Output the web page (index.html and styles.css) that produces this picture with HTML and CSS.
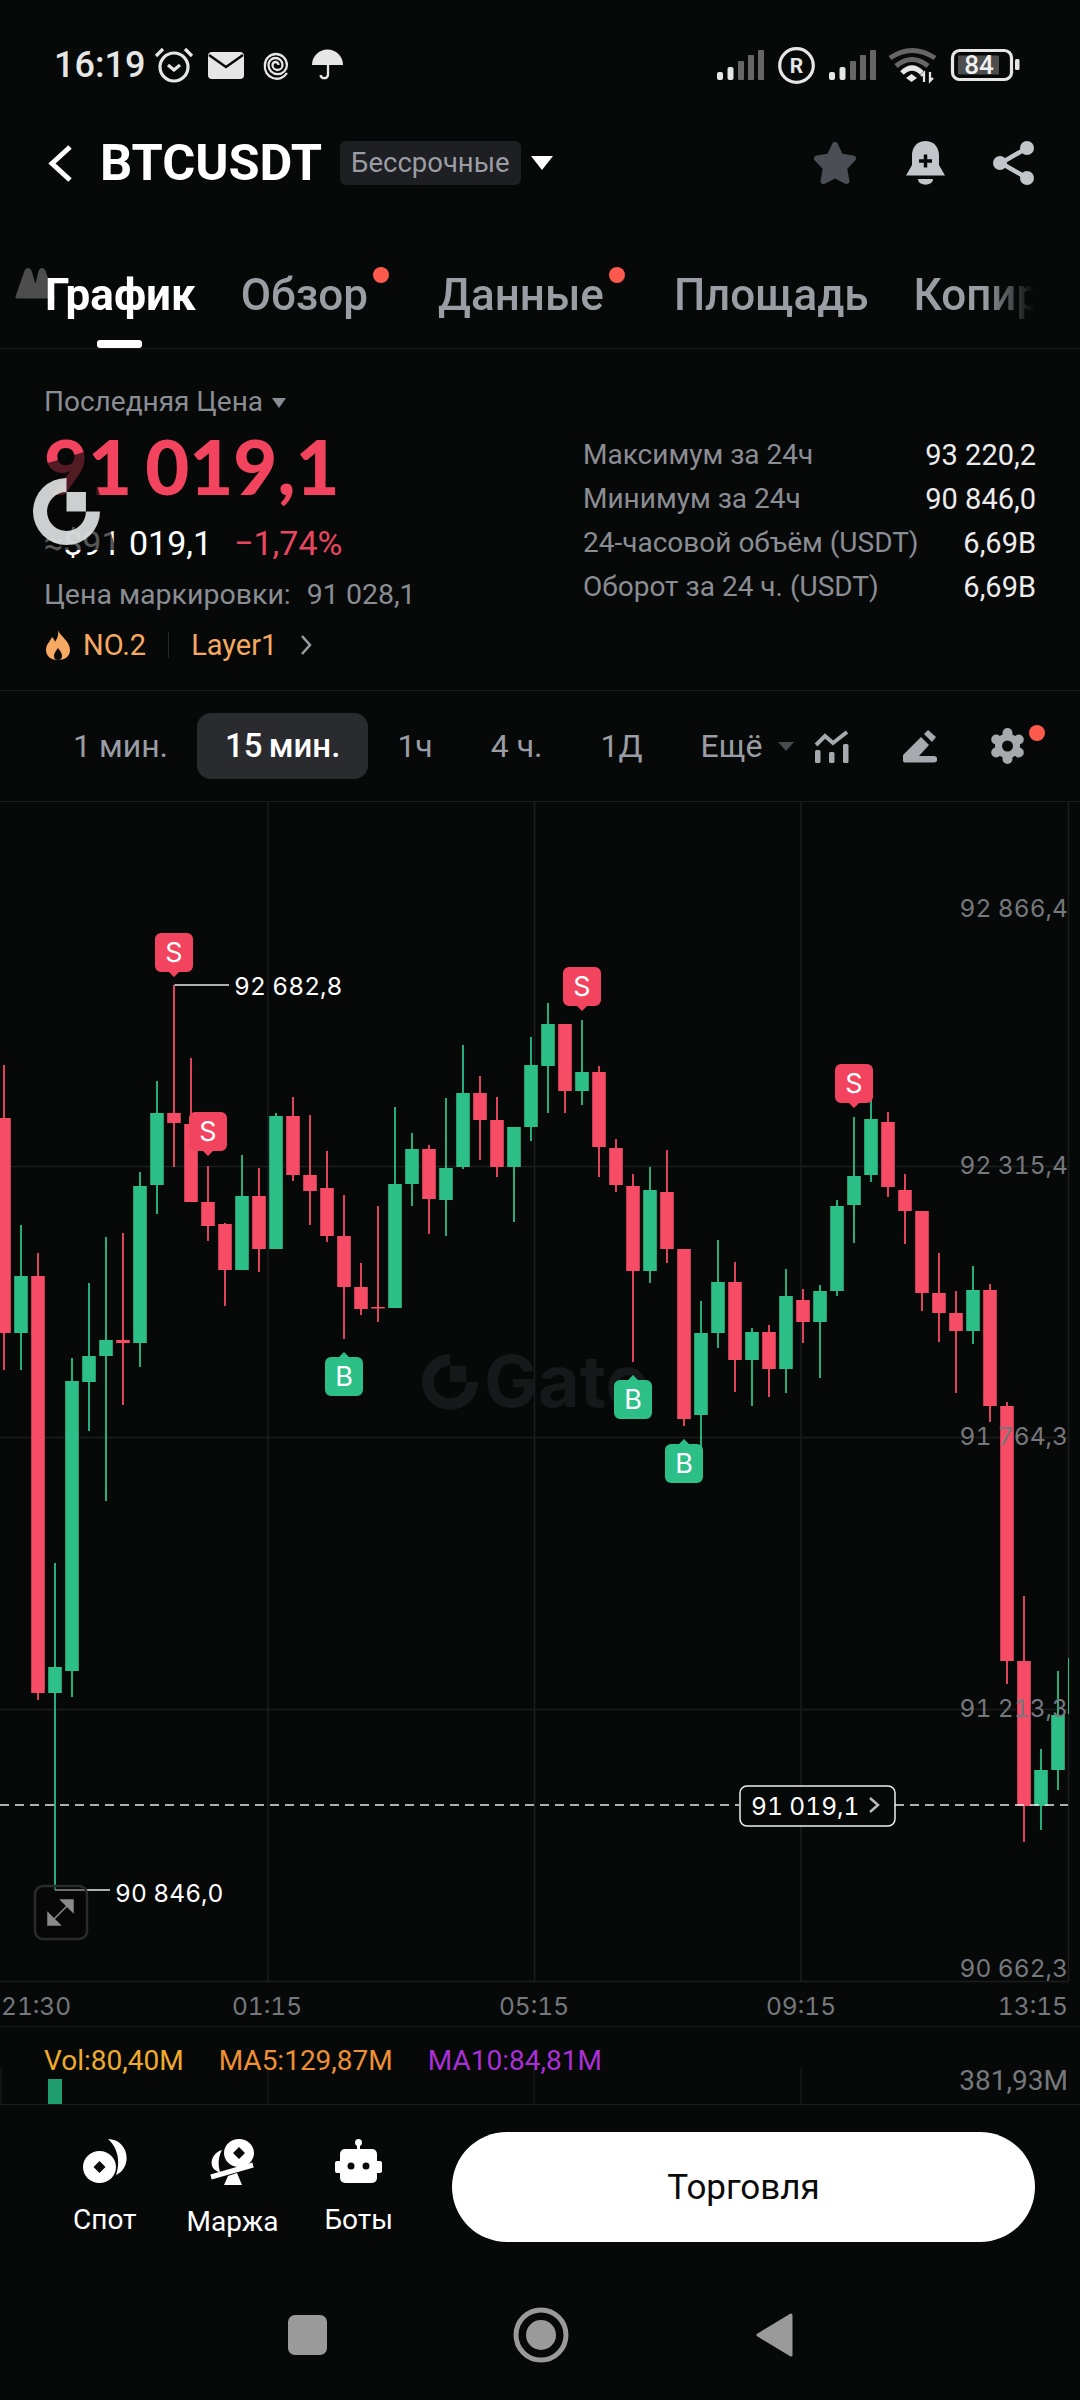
FILE: index.html
```html
<!DOCTYPE html>
<html lang="ru">
<head>
    <meta charset="UTF-8">
    <meta name="viewport" content="width=device-width, initial-scale=1.0">
    <title>BTCUSDT</title>
    <link rel="stylesheet" href="styles.css">
</head>
<body>
<div class="screen">
    <svg width="0" height="0" class="defs">
        <symbol id="gate-logo" viewBox="0 0 100 100">
            <path d="M50 0A50 50 0 1 0 100 50H79A29 29 0 1 1 50 21ZM50 21H79V50H50Z"/>
        </symbol>
    </svg>

    <div class="status">
        <span class="clock">16:19</span>
        <svg class="ic-alarm" width="40" height="37" viewBox="0 0 40 37"><circle class="line" cx="20" cy="21" r="14"/><path class="line" d="M2 10 9 3M38 10 31 3M14 19l6 5 6-5"/></svg>
        <svg class="ic-mail" width="36" height="27" viewBox="0 0 36 27"><rect width="36" height="27" rx="4"/><path class="notch" d="M1 3 18 15 35 3"/></svg>
        <svg class="ic-spiral" width="29" height="29" viewBox="0 0 29 29"><path class="line thin" d="M16.500 14A3 3 0 0 0 10.500 14A5 5 0 0 0 20.500 14A7 7 0 0 0 6.500 14A9.200 9.200 0 0 0 24.900 14A11 11 0 0 0 2.900 14A12 12 0 0 0 25 22"/></svg>
        <svg class="ic-umbrella" width="31" height="32" viewBox="0 0 31 32"><path d="M0 16A15.500 15.500 0 0 1 31 16Z"/><path class="line thin" d="M16 16V26a3.800 3.800 0 0 1-7.500 0"/></svg>
        <span class="status-gap"></span>
        <svg class="signal" width="47" height="30" viewBox="0 0 47 30"><rect y="22" width="6" height="8" rx="2"/><rect x="10.500" y="17" width="6" height="13" rx="2"/><rect class="dim" x="21" y="11" width="6" height="19" rx="1"/><rect class="dim" x="31" y="5" width="6" height="25" rx="1"/><rect class="dim" x="41" width="6" height="30" rx="1"/></svg>
        <svg class="ic-reg" width="37" height="37" viewBox="0 0 37 37"><circle class="line" cx="18.500" cy="18.500" r="16.800"/><text x="18.500" y="26" text-anchor="middle">R</text></svg>
        <svg class="signal" width="47" height="30" viewBox="0 0 47 30"><rect y="22" width="6" height="8" rx="2"/><rect x="10.500" y="17" width="6" height="13" rx="2"/><rect class="dim" x="21" y="11" width="6" height="19" rx="1"/><rect class="dim" x="31" y="5" width="6" height="25" rx="1"/><rect class="dim" x="41" width="6" height="30" rx="1"/></svg>
        <svg class="ic-wifi" width="47" height="34" viewBox="0 0 47 34"><path class="line arc-dim" d="M1 10Q23-5 46 10M7 18Q23 5 39 18"/><path class="line arc" d="M13 25Q23 15 33 25"/><path d="M17 30l5.500-4 5.500 4-5.500 4Z"/><path class="line thin" d="M35 34V25l-3 3M41 24V33l3-3"/></svg>
        <svg class="ic-battery" width="69" height="32" viewBox="0 0 69 32"><rect class="line" x="1.500" y="1.500" width="59" height="29" rx="7"/><rect class="dim-fill" x="7" y="6.500" width="41" height="19"/><rect x="64" y="10" width="4.500" height="11" rx="1.500"/><text x="28" y="25" text-anchor="middle">84</text></svg>
    </div>

    <div class="header">
        <svg class="back" width="24" height="37" viewBox="0 0 24 37"><path d="M22 2 4 18.500 22 35" fill="none" stroke="#fff" stroke-width="5"/></svg>
        <h1>BTCUSDT</h1>
        <span class="tag">Бессрочные</span>
        <span class="tag-arrow"></span>
        <div class="header-actions">
            <svg width="46" height="44" viewBox="0 0 46 44"><path d="M23 4 28.500 15.500 41 17.500 32 27 34.500 40 23 34 11.500 40 14 27 5 17.500 17.500 15.500Z" fill="#4c4e55" stroke="#4c4e55" stroke-width="6" stroke-linejoin="round"/></svg>
            <svg width="39" height="44" viewBox="0 0 39 44"><path d="M19.500 0C9 0 6 9 6 14V24L0 34.500H39L33 24V14C33 9 30 0 19.500 0Z" fill="#c2c5c9"/><path d="M12 38H27C27 45.500 12 45.500 12 38Z" fill="#c2c5c9"/><path d="M13 20H26M19.500 13.500V26.500" stroke="#070808" stroke-width="3.500"/></svg>
            <svg width="41" height="44" viewBox="0 0 41 44"><path d="M34 7 8 22 34 37" fill="none" stroke="#c2c5c9" stroke-width="4.500"/><circle cx="34" cy="7" r="7" fill="#c2c5c9"/><circle cx="7" cy="22" r="7" fill="#c2c5c9"/><circle cx="34" cy="37" r="7" fill="#c2c5c9"/></svg>
        </div>
    </div>

    <div class="tabs">
        <svg class="ghost" width="41" height="33" viewBox="0 0 41 33"><path d="M3 30 12 4q2-3 4 0l8 26ZM20 30 26 4q2-3 4 0l9 26Z" fill="#4d4d4d" stroke="#4d4d4d" stroke-width="3" stroke-linejoin="round"/></svg>
        <div class="tab-list">
            <span class="tab tab-active">График</span>
            <span class="tab tab-dot">Обзор</span>
            <span class="tab tab-dot">Данные</span>
            <span class="tab">Площадь</span>
            <span class="tab">Копир</span>
        </div>
        <span class="tab-bar"></span>
    </div>

    <div class="info">
        <div class="info-left">
            <div class="muted last-label">Последняя Цена <span class="small-arrow"></span></div>
            <div class="price">91 019,1</div>
            <div class="sub-price"><span>≈$91 019,1</span><span class="down">−1,74%</span></div>
            <div class="muted mark-price"><span>Цена маркировки:</span><span>91 028,1</span></div>
            <div class="rank">
                <svg width="24" height="30" viewBox="0 0 24 30"><path d="M12 0C14 6 24 11 24 20 24 27 18 30 12 30 6 30 0 27 0 20 0 14 4 12 6 7 8 9 9 11 9 12 11 9 13 5 12 0Z" fill="#f5a962"/><path d="M12 18C14 21 16 23 16 26 16 29 14 30 12 30 10 30 8 29 8 26 8 23 10 21 12 18Z" fill="#070808"/></svg>
                <span>NO.2</span>
                <i class="rank-sep"></i>
                <span>Layer1</span>
                <svg class="rank-more" width="12" height="22" viewBox="0 0 12 22"><path d="M2 2 10 11 2 20" fill="none" stroke="#9a9da3" stroke-width="2.500"/></svg>
            </div>
        </div>
        <dl class="stats">
            <div><dt>Максимум за 24ч</dt><dd>93 220,2</dd></div>
            <div><dt>Минимум за 24ч</dt><dd>90 846,0</dd></div>
            <div><dt>24-часовой объём (USDT)</dt><dd>6,69B</dd></div>
            <div><dt>Оборот за 24 ч. (USDT)</dt><dd>6,69B</dd></div>
        </dl>
    </div>

    <div class="intervals">
        <span class="interval">1 мин.</span>
        <span class="interval interval-active">15 мин.</span>
        <span class="interval">1ч</span>
        <span class="interval">4 ч.</span>
        <span class="interval">1Д</span>
        <span class="interval interval-more">Ещё</span>
        <span class="more-arrow"></span>
        <div class="tools">
            <svg width="35" height="33" viewBox="0 0 35 33"><path class="tool-line" d="M2 15 11 6 19 13 33 2"/><rect x="1" y="20" width="5.500" height="13" rx="1.500"/><rect x="15" y="22" width="5.500" height="11" rx="1.500"/><rect x="29" y="14" width="5.500" height="19" rx="1.500"/></svg>
            <svg width="34" height="33" viewBox="0 0 34 33"><path d="M0 25 18 7 26 15 16 26H31a3 3 0 0 1 0 6.500H2a2 2 0 0 1-2-2ZM21 4 25 0 33 7 29 12Z"/></svg>
            <svg class="gear" width="33" height="36" viewBox="0 0 33 36"><circle cx="16.500" cy="18" r="12.500"/><circle cx="16.500" cy="5" r="5"/><circle cx="27.800" cy="11.500" r="5"/><circle cx="27.800" cy="24.500" r="5"/><circle cx="16.500" cy="31" r="5"/><circle cx="5.200" cy="24.500" r="5"/><circle cx="5.200" cy="11.500" r="5"/><circle class="gear-hole" cx="16.500" cy="18" r="5.500"/></svg>
        </div>
    </div>

    <div class="chart">
        <svg width="1080" height="1225" viewBox="0 802 1080 1225">
            <path class="grid" d="M268 802V1981M534.500 802V1981M801 802V1981M1068.500 802V1981M0 1166.500H1068M0 1437.500H1068M0 1709.500H1068M0 1981.500H1068"/>

            <g class="watermark">
                <use href="#gate-logo" x="422" y="1354" width="56" height="56"/>
                <text x="484" y="1407">Gate</text>
            </g>

            <path class="wick red" d="M4 1065V1370M38 1253V1700M123 1233V1405M174 985V1167M191 1058V1202M208 1166V1241M225 1223V1306M259 1168V1272M293 1097V1181M310 1115V1225M327 1151V1242M344 1195V1339M361 1263V1315M378 1206V1322M429 1145V1234M480 1076V1160M497 1097V1177M565 1024V1113M599 1066V1177M616 1139V1192M633 1174V1362M667 1150V1263M684 1249V1426M735 1262V1392M769 1325V1397M803 1289V1343M888 1112V1197M905 1174V1244M922 1211V1311M939 1253V1342M956 1291V1393M990 1284V1422M1007 1402V1684M1024 1596V1842"/>
            <path class="body red" d="M4 1118V1333M38 1276V1693M123 1340V1343M174 1113V1123M191 1124V1202M208 1202V1226M225 1224V1270M259 1196V1249M293 1116V1175M310 1175V1191M327 1188V1236M344 1236V1287M361 1287V1309M378 1307V1308.500M429 1149V1199M480 1093V1120M497 1120V1167M565 1024V1091M599 1072V1147M616 1148V1185M633 1186V1271M667 1192V1249M684 1249V1419M735 1282V1360M769 1332V1369M803 1300V1322M888 1122V1187M905 1190V1211M922 1211V1293M939 1293V1313M956 1313V1331M990 1290V1406M1007 1406V1661M1024 1661V1806"/>
            <path class="wick green" d="M21 1225V1370M55 1563V1890M72 1358V1697M89 1283V1431M106 1237V1501M140 1172V1367M157 1081V1214M242 1155V1270M276 1113V1249M395 1107V1308M412 1133V1206M446 1098V1236M463 1045V1169M514 1127V1222M531 1037V1141M548 1003V1113M582 1020V1105M650 1167V1283M701 1301V1448M718 1240V1348M752 1328V1406M786 1269V1393M820 1285V1378M837 1200V1296M854 1117V1243M871 1100V1182M973 1266V1344M1041 1749V1830M1058 1671V1790"/>
            <path class="body green" d="M21 1276V1333M55 1667V1693M72 1381V1671M89 1356V1382M106 1340V1356M140 1186V1343M157 1113V1185M242 1196V1270M276 1116V1249M395 1184V1308M412 1149V1184M446 1168V1200M463 1093V1167M514 1127V1167M531 1065V1127M548 1024V1066M582 1072V1091M650 1190V1271M701 1333V1415M718 1282V1333M752 1332V1360M786 1296V1369M820 1291V1322M837 1206V1291M854 1176V1205M871 1119V1175M973 1290V1331M1041 1770V1806M1058 1715V1770"/>
            <path class="edge-wick" d="M1068.500 1658V1714"/>

            <path class="last-line" d="M0 1805H739M895 1805H1068"/>

            <g class="axis">
                <text x="1068" y="917">92 866,4</text>
                <text x="1068" y="1174">92 315,4</text>
                <text x="1068" y="1445">91 764,3</text>
                <text x="1068" y="1717">91 213,3</text>
                <text x="1068" y="1977">90 662,3</text>
            </g>
            <g class="axis axis-time">
                <text x="1" y="2015" class="start">21:30</text>
                <text x="267" y="2015" class="mid">01:15</text>
                <text x="534" y="2015" class="mid">05:15</text>
                <text x="801" y="2015" class="mid">09:15</text>
                <text x="1068" y="2015">13:15</text>
            </g>

            <path class="pointer" d="M174.500 985H229"/>
            <text class="extreme" x="234" y="995">92 682,8</text>
            <path class="pointer" d="M55 1890H110"/>
            <text class="extreme" x="115" y="1902">90 846,0</text>

            <g class="mark sell" transform="translate(174 933)"><path d="M-13 0H13a6 6 0 0 1 6 6V33a6 6 0 0 1-6 6H5L0 44-5 39H-13a6 6 0 0 1-6-6V6a6 6 0 0 1 6-6Z"/><text y="29">S</text></g>
            <g class="mark sell" transform="translate(208 1112)"><path d="M-13 0H13a6 6 0 0 1 6 6V33a6 6 0 0 1-6 6H5L0 44-5 39H-13a6 6 0 0 1-6-6V6a6 6 0 0 1 6-6Z"/><text y="29">S</text></g>
            <g class="mark sell" transform="translate(582 967)"><path d="M-13 0H13a6 6 0 0 1 6 6V33a6 6 0 0 1-6 6H5L0 44-5 39H-13a6 6 0 0 1-6-6V6a6 6 0 0 1 6-6Z"/><text y="29">S</text></g>
            <g class="mark sell" transform="translate(854 1064)"><path d="M-13 0H13a6 6 0 0 1 6 6V33a6 6 0 0 1-6 6H5L0 44-5 39H-13a6 6 0 0 1-6-6V6a6 6 0 0 1 6-6Z"/><text y="29">S</text></g>
            <g class="mark buy" transform="translate(344 1357)"><path d="M-13 0H-5L0-5 5 0H13a6 6 0 0 1 6 6V33a6 6 0 0 1-6 6H-13a6 6 0 0 1-6-6V6a6 6 0 0 1 6-6Z"/><text y="29">B</text></g>
            <g class="mark buy" transform="translate(633 1380)"><path d="M-13 0H-5L0-5 5 0H13a6 6 0 0 1 6 6V33a6 6 0 0 1-6 6H-13a6 6 0 0 1-6-6V6a6 6 0 0 1 6-6Z"/><text y="29">B</text></g>
            <g class="mark buy" transform="translate(684 1444)"><path d="M-13 0H-5L0-5 5 0H13a6 6 0 0 1 6 6V33a6 6 0 0 1-6 6H-13a6 6 0 0 1-6-6V6a6 6 0 0 1 6-6Z"/><text y="29">B</text></g>

            <rect class="price-tag" x="740" y="1786" width="155" height="40" rx="7"/>
            <text class="extreme" x="751" y="1815">91 019,1</text>
            <path class="tag-chevron" d="M870 1798 878 1805 870 1812"/>

            <rect class="expand" x="35" y="1886" width="52" height="53" rx="8"/>
            <path class="expand-icon" d="M61 1900H73V1912ZM48 1913V1925H60ZM52 1921 69 1904"/>
        </svg>
    </div>

    <div class="volume">
        <svg class="volume-bars" width="1080" height="78" viewBox="0 0 1080 78"><path d="M1 41V77M268 41V77M534 41V77M801 41V77" stroke="#17181a" stroke-width="1.500"/><rect x="48" y="52" width="14" height="25" fill="#1f9d6e"/></svg>
        <div class="legend">
            <span class="vol">Vol:80,40M</span>
            <span class="ma5">MA5:129,87M</span>
            <span class="ma10">MA10:84,81M</span>
        </div>
        <span class="volume-scale">381,93M</span>
    </div>

    <div class="footer">
        <div class="shortcuts">
            <div class="shortcut">
                <svg width="44" height="44" viewBox="0 0 44 44"><path fill-rule="evenodd" d="M16.500 12C25.500 12 33 19 33 28S25.500 44 16.500 44 0 37 0 28 7.500 12 16.500 12ZM16.500 22 10.500 28 16.500 34 22.500 28Z"/><path d="M25 0C38 0 46 12 43 24 41 31 37 34 33 36 37 24 36 10 25 0Z"/></svg>
                <span>Спот</span>
            </div>
            <div class="shortcut">
                <svg width="46" height="46" viewBox="0 0 46 46"><path fill-rule="evenodd" d="M30 0C38 0 45 6 45 14S38 28 30 28 15 22 15 14 22 0 30 0ZM30 8 24 14 30 20 36 14Z"/><path d="M13 11C5 13 0 22 4 29 6 31 8 33 11 33 9 26 9 18 13 11Z"/><path d="M2 38 44 26" fill="none" stroke="#fff" stroke-width="5"/><path d="M19 37 28 34 33 46H15Z"/></svg>
                <span>Маржа</span>
            </div>
            <div class="shortcut">
                <svg width="47" height="44" viewBox="0 0 47 44"><circle cx="23.500" cy="3.500" r="3.500"/><rect x="22" y="4" width="3" height="8"/><rect x="5" y="10" width="37" height="34" rx="5"/><rect y="22" width="47" height="12" rx="2"/><circle cx="16" cy="27" r="3.500" fill="#070808"/><circle cx="31" cy="27" r="3.500" fill="#070808"/></svg>
                <span>Боты</span>
            </div>
        </div>
        <button class="trade">Торговля</button>
    </div>

    <div class="navbar">
        <span class="nav-square"></span>
        <svg width="56" height="56" viewBox="0 0 56 56"><circle cx="28" cy="28" r="25" fill="none" stroke="#9a9a9a" stroke-width="5"/><circle cx="28" cy="28" r="15" fill="#9a9a9a"/></svg>
        <svg width="38" height="46" viewBox="0 0 38 46"><path d="M36 3 3 23 36 43Z" fill="#9a9a9a" stroke="#9a9a9a" stroke-width="3" stroke-linejoin="round"/></svg>
    </div>

    <div class="veil"></div>
    <svg class="spinner"><use href="#gate-logo"/></svg>
</div>
</body>
</html>
```

FILE: styles.css
```css
* { box-sizing: border-box; }
html, body { margin: 0; padding: 0; background: #070808; }
body { font-family: Roboto, "Noto Sans", sans-serif; color: #fff; }

.screen { position: relative; width: 1080px; height: 2400px; overflow: hidden; background: #070808; display: flex; flex-direction: column; }
.defs { position: absolute; }
.muted { color: #8a8d93; }

/* status bar */
.status { height: 130px; flex: none; display: flex; align-items: center; padding: 0 60px 0 54px; color: #e6e6e6; fill: #e6e6e6; }
.status svg { flex: none; overflow: visible; }
.status .line { fill: none; stroke: #e6e6e6; stroke-width: 3.2; }
.status .thin { stroke-width: 2.3; }
.status .notch { fill: none; stroke: #070808; stroke-width: 2.4; }
.clock { font-size: 36px; font-weight: 500; width: 100px; }
.ic-alarm { margin-right: 14px; margin-top: -2px; }
.ic-mail { margin-right: 18px; }
.ic-umbrella { margin-left: 21px; }
.status-gap { flex: 1; }
.signal .dim { fill: #666; }
.ic-reg { margin: 0 14px; }
.ic-reg text { font: 700 21px Roboto, sans-serif; }
.status .arc-dim { stroke: #666; stroke-width: 5; }
.status .arc { stroke-width: 5; }
.ic-wifi { margin-left: 13px; margin-right: 15px; }
.ic-battery .dim-fill { fill: #4d4d4d; }
.ic-battery text { font: 500 26px Roboto, sans-serif; fill: #f0f0f0; }

/* title row */
.header { height: 66px; flex: none; display: flex; align-items: center; padding: 0 46px 0 48px; }
h1 { margin: 0 18px 0 28px; font-size: 50.5px; font-weight: 700; line-height: 66px; }
.tag { height: 44px; line-height: 44px; padding: 0 11px; border-radius: 6px; background: #1e1f22; color: #9a9da3; font-size: 27.5px; }
.tag-arrow { margin-left: 10px; border-top: 14px solid #fff; border-left: 11px solid transparent; border-right: 11px solid transparent; }
.header-actions { margin-left: auto; display: flex; gap: 48px; align-items: center; }

/* tabs */
.tabs { position: relative; height: 153px; flex: none; padding: 71px 46px 0 45px; border-bottom: 1px solid #1b1c1e; }
.tab-list { display: flex; gap: 45px; font-size: 44px; line-height: 56px; font-weight: 500; color: #9a9da3; white-space: nowrap; -webkit-mask-image: linear-gradient(to right, #000 95%, transparent 100%); mask-image: linear-gradient(to right, #000 95%, transparent 100%); }
.tab { position: relative; flex: none; }
.tab-active { color: #fff; font-weight: 700; }
.tab-dot { margin-right: 25px; }
.ghost { position: absolute; left: 14px; top: 71px; }
.tab-bar { position: absolute; left: 97px; top: 144px; width: 45px; height: 8px; border-radius: 3px; background: #fff; }
.tab-dot::after { content: ""; position: absolute; left: 100%; margin-left: 5px; top: 0; width: 16px; height: 16px; border-radius: 50%; background: #fb5a4c; }

/* price block */
.info { height: 342px; flex: none; display: flex; justify-content: space-between; padding: 33px 44px 0 44px; border-bottom: 1px solid #1b1c1e; }
.last-label { font-size: 28px; line-height: 40px; }
.small-arrow { display: inline-block; vertical-align: middle; margin: 0 0 2px 2px; border-top: 10px solid #8a8d93; border-left: 7px solid transparent; border-right: 7px solid transparent; }
.price { margin-top: 4px; font-family: Lato, Roboto, sans-serif; font-size: 76px; line-height: 80px; font-weight: 900; word-spacing: -5px; color: #f2445f; }
.sub-price { display: flex; gap: 22px; margin-top: 17px; font-size: 34px; line-height: 40px; }
.down { color: #e8475f; }
.mark-price { display: flex; gap: 16px; margin-top: 12px; font-size: 28.5px; line-height: 40px; }
.rank { display: flex; align-items: center; margin-top: 10px; height: 40px; font-size: 29px; color: #f5a962; }
.rank svg { flex: none; }
.rank svg:first-child { margin: 0 13px 0 2px; }
.rank-sep { width: 1px; height: 26px; margin: 0 22px; background: #26272a; }
.rank-more { margin-left: 23px; }
.stats { width: 453px; margin: 51px 0 0; font-size: 28px; line-height: 44px; }
.stats div { display: flex; justify-content: space-between; }
.stats dt { color: #8a8d93; }
.stats dd { margin: 0; color: #ececec; font-size: 29px; }

/* timeframes */
.intervals { height: 111px; flex: none; display: flex; align-items: center; padding: 0 56px 0 44px; border-bottom: 1px solid #1b1c1e; font-size: 32px; color: #9a9da3; }
.interval { height: 66px; line-height: 66px; padding: 0 29px; white-space: nowrap; }
.interval-active { padding: 0 28px; border-radius: 14px; background: #2a2b2f; color: #fff; font-size: 33px; font-weight: 500; word-spacing: -2px; }
.more-arrow { margin-left: -13px; border-top: 9px solid #4a4c50; border-left: 8px solid transparent; border-right: 8px solid transparent; }
.tools { position: relative; margin-left: auto; display: flex; align-items: center; gap: 54px; fill: #a6a9ae; }
.tool-line { fill: none; stroke: #a6a9ae; stroke-width: 4; }
.gear { overflow: visible; }
.gear-hole { fill: #070808; }
.tools::after { content: ""; position: absolute; right: -21px; top: -3px; width: 16px; height: 16px; border-radius: 50%; background: #fb5a4c; }

/* chart */
.chart { height: 1225px; flex: none; border-bottom: 1px solid #17181a; }
.chart svg { display: block; }
.grid { stroke: #1c1d1f; stroke-width: 1.5; fill: none; }
.watermark { fill: #17181a; }
.watermark text { font: 700 72px Inter, sans-serif; }
.wick { stroke-width: 1.8; fill: none; }
.body { stroke-width: 13.6; fill: none; }
.red { stroke: #f64c66; }
.green { stroke: #2cbf88; }
.edge-wick { stroke: #2cbf88; stroke-width: 1; }
.last-line { stroke: #e8e8e8; stroke-width: 1.5; stroke-dasharray: 9 6; fill: none; }
.axis text { font: 400 24.5px Inter, sans-serif; font-variant-numeric: tabular-nums; fill: #75787c; text-anchor: end; }
.axis-time .start { text-anchor: start; }
.axis-time .mid { text-anchor: middle; }
.pointer { stroke: #e8e8e8; stroke-width: 1.5; fill: none; }
.extreme { font: 400 24.5px Inter, sans-serif; font-variant-numeric: tabular-nums; fill: #fff; }
.mark text { font: 400 27px Inter, sans-serif; fill: #fff; text-anchor: middle; }
.sell path { fill: #f2445f; }
.buy path { fill: #2cbf88; }
.price-tag { fill: #070808; fill-opacity: .85; stroke: #eee; stroke-width: 1.5; }
.tag-chevron { fill: none; stroke: #bbb; stroke-width: 2.5; }
.expand { fill: #070808; fill-opacity: .4; stroke: #2a2b2d; stroke-width: 2.5; }
.expand-icon { fill: #8a8a8a; stroke: #8a8a8a; stroke-width: 1.5; }

/* volume */
.volume { position: relative; height: 78px; flex: none; border-bottom: 1.5px solid #1c1d1f; }
.volume-bars { position: absolute; left: 0; top: 0; }
.legend { position: relative; display: flex; gap: 35px; padding: 14px 0 0 44px; font-size: 28px; line-height: 40px; }
.vol { color: #efab2c; }
.ma5 { color: #ee9034; }
.ma10 { color: #a92fd6; }
.volume-scale { position: absolute; right: 12px; top: 34px; font-size: 28px; line-height: 40px; color: #75787c; }

/* bottom actions */
.footer { height: 165px; flex: none; display: flex; align-items: flex-start; padding: 27px 45px 0 73px; }
.shortcuts { display: flex; gap: 50px; }
.shortcut { display: flex; flex-direction: column; align-items: center; gap: 17px; padding-top: 7px; font-size: 28px; line-height: 40px; fill: #fff; }
.shortcut:last-child { margin-left: -4px; }
.trade { margin-left: auto; width: 583px; height: 110px; border: 0; border-radius: 55px; background: #fff; color: #0a0a0a; font: 400 35px Roboto, sans-serif; }

/* android nav */
.navbar { flex: 1; display: flex; align-items: center; justify-content: center; gap: 186px; }
.nav-square { width: 39px; height: 40px; border-radius: 7px; background: #9a9a9a; }

/* things floating over the page */
.veil { position: absolute; left: 44px; top: 440px; width: 72px; height: 110px; background: rgba(7, 8, 8, .68); clip-path: polygon(0 22%, 60% 10%, 100% 100%, 0 100%); }
.spinner { position: absolute; left: 33px; top: 478px; width: 67px; height: 67px; fill: rgba(226, 230, 230, .9); }
```
